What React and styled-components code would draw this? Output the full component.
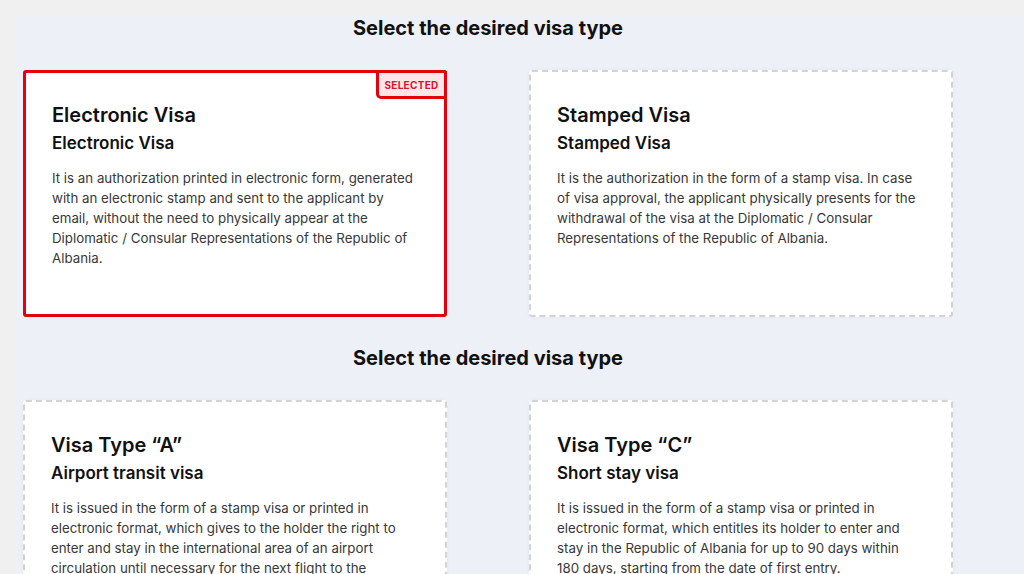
import React, { useState } from "react";
import styled, { createGlobalStyle, css } from "styled-components";

const GlobalStyle = createGlobalStyle`
  html, body {
    margin: 0;
    padding: 0;
    background: #f0f0f0;
    font-family: Inter, "Noto Sans", sans-serif;
    color: #111;
  }
`;

const Panel = styled.div`
  margin: 16px 0 0 16px;
  padding: 0 0 40px 7px;
  background: #edf0f6;
  min-height: 600px;
`;

const Container = styled.div`
  width: 930px;
`;

const Section = styled.section`
  & + & {
    margin-top: 29px;
  }
`;

const Heading = styled.h2`
  margin: 0 0 30px;
  font-size: 20px;
  line-height: 24px;
  font-weight: 700;
  text-align: center;
  color: #111;
`;

const Grid = styled.div`
  display: grid;
  grid-template-columns: 424px 424px;
  column-gap: 82px;
`;

const Card = styled.div`
  position: relative;
  box-sizing: border-box;
  min-height: 247px;
  background: #fff;
  border-radius: 3px;
  cursor: pointer;
  ${(p) =>
    p.$selected
      ? css`
          border: 3px solid #e3000f;
          padding: 30px 29px 26px 26px;
        `
      : css`
          border: 2px dashed #d2d3d8;
          padding: 31px 30px 26px 26px;
          box-shadow: 0 0 4px rgba(0, 0, 0, 0.04);
        `}
`;

const Badge = styled.span`
  position: absolute;
  top: -3px;
  right: -3px;
  box-sizing: border-box;
  width: 71px;
  height: 29px;
  display: flex;
  align-items: center;
  justify-content: center;
  background: #fde7e6;
  border: 3px solid #e3000f;
  border-radius: 0 3px 0 5px;
  color: #d9132b;
  font-size: 10px;
  font-weight: 700;
  letter-spacing: 0.3px;
`;

const Title = styled.h3`
  margin: 0;
  font-size: 20px;
  line-height: 24px;
  font-weight: 600;
  color: #111;
`;

const Subtitle = styled.h4`
  margin: 5px 0 14px;
  font-size: 17px;
  line-height: 22px;
  font-weight: 600;
  color: #111;
`;

const Body = styled.p`
  margin: 0;
  font-size: 13.3px;
  line-height: 20px;
  color: #383838;
`;

const visaForms = [
  {
    id: "electronic",
    title: "Electronic Visa",
    subtitle: "Electronic Visa",
    text: "It is an authorization printed in electronic form, generated with an electronic stamp and sent to the applicant by email, without the need to physically appear at the Diplomatic / Consular Representations of the Republic of Albania.",
  },
  {
    id: "stamped",
    title: "Stamped Visa",
    subtitle: "Stamped Visa",
    text: "It is the authorization in the form of a stamp visa. In case of visa approval, the applicant physically presents for the withdrawal of the visa at the Diplomatic / Consular Representations of the Republic of Albania.",
  },
];

const visaTypes = [
  {
    id: "A",
    title: "Visa Type \u201CA\u201D",
    subtitle: "Airport transit visa",
    text: "It is issued in the form of a stamp visa or printed in electronic format, which gives to the holder the right to enter and stay in the international area of an airport circulation until necessary for the next flight to the country of destination.",
  },
  {
    id: "C",
    title: "Visa Type \u201CC\u201D",
    subtitle: "Short stay visa",
    text: "It is issued in the form of a stamp visa or printed in electronic format, which entitles its holder to enter and stay in the Republic of Albania for up to 90 days within 180 days, starting from the date of first entry.",
  },
];

function VisaCard({ visa, selected, onSelect }) {
  return (
    <Card $selected={selected} onClick={() => onSelect(visa.id)}>
      {selected && <Badge>SELECTED</Badge>}
      <Title>{visa.title}</Title>
      <Subtitle>{visa.subtitle}</Subtitle>
      <Body>{visa.text}</Body>
    </Card>
  );
}

export default function App() {
  const [form, setForm] = useState("electronic");
  const [type, setType] = useState(null);

  return (
    <>
      <GlobalStyle />
      <Panel>
        <Container>
          <Section>
            <Heading>Select the desired visa type</Heading>
            <Grid>
              {visaForms.map((v) => (
                <VisaCard key={v.id} visa={v} selected={form === v.id} onSelect={setForm} />
              ))}
            </Grid>
          </Section>
          <Section>
            <Heading>Select the desired visa type</Heading>
            <Grid>
              {visaTypes.map((v) => (
                <VisaCard key={v.id} visa={v} selected={type === v.id} onSelect={setType} />
              ))}
            </Grid>
          </Section>
        </Container>
      </Panel>
    </>
  );
}
